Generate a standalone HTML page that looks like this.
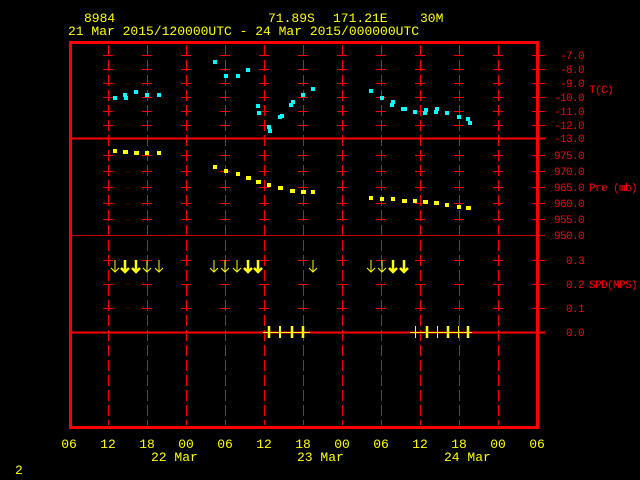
<!DOCTYPE html>
<html><head><meta charset="utf-8"><style>
html,body{margin:0;padding:0;background:#000;width:640px;height:480px;overflow:hidden}
svg{display:block}
text{font-family:"Liberation Mono",monospace;font-size:13px;white-space:pre}
.s text{font-size:11px;letter-spacing:-0.6px}
</style></head><body>
<svg width="640" height="480" viewBox="0 0 640 480" xml:space="preserve">
<defs>
<g id="row" stroke="#f00" stroke-width="1">
<path d="M103 0h10M142 0h10M181 0h10M220 0h10M259 0h10M298 0h10M337 0h10M376 0h10M415 0h10M454 0h10M493 0h10M532 0h13"/>
</g>
<path id="ar" d="M0 0v12M-4 8l4 4l4-4" fill="none" stroke="#ff0" stroke-width="1"/>
<path id="arb" d="M0 0v12M-4 8l4 4l4-4" fill="none" stroke="#ff0" stroke-width="2.5"/>
</defs>
<g stroke="#f00" stroke-width="1" stroke-dasharray="11,4">
<path d="M108.5 45V425M147.5 45V425M186.5 45V425M225.5 45V425M264.5 45V425M303.5 45V425M342.5 45V425M381.5 45V425M420.5 45V425M459.5 45V425M498.5 45V425"/>
</g>
<g>
<use href="#row" y="55.5"/><use href="#row" y="69.5"/><use href="#row" y="83.5"/><use href="#row" y="97.5"/><use href="#row" y="111.5"/><use href="#row" y="125.5"/>
<use href="#row" y="155.5"/><use href="#row" y="171.5"/><use href="#row" y="187.5"/><use href="#row" y="203.5"/><use href="#row" y="219.5"/>
<use href="#row" y="260.5"/><use href="#row" y="284.5"/><use href="#row" y="308.5"/>
</g>
<path d="M70 138.5H545" stroke="#f00" stroke-width="2"/>
<path d="M70 235.5H545" stroke="#c00" stroke-width="1"/>
<path d="M70 332.5H545" stroke="#f00" stroke-width="2"/>
<rect x="70.5" y="42.5" width="467" height="385" fill="none" stroke="#f00" stroke-width="3"/>
<g fill="#0ff">
<rect x="113" y="96" width="4" height="4"/><rect x="123" y="93" width="4" height="4"/><rect x="124" y="96" width="4" height="4"/><rect x="134" y="90" width="4" height="4"/><rect x="145" y="93" width="4" height="4"/><rect x="157" y="93" width="4" height="4"/>
<rect x="213" y="60" width="4" height="4"/><rect x="224" y="74" width="4" height="4"/><rect x="236" y="74" width="4" height="4"/><rect x="246" y="68" width="4" height="4"/><rect x="256" y="104" width="4" height="4"/><rect x="257" y="111" width="4" height="4"/><rect x="267" y="125" width="4" height="4"/><rect x="268" y="129" width="4" height="4"/><rect x="278" y="115" width="4" height="4"/><rect x="280" y="114" width="4" height="4"/><rect x="289" y="103" width="4" height="4"/><rect x="291" y="100" width="4" height="4"/><rect x="301" y="93" width="4" height="4"/><rect x="311" y="87" width="4" height="4"/>
<rect x="369" y="89" width="4" height="4"/><rect x="380" y="96" width="4" height="4"/><rect x="391" y="100" width="4" height="4"/><rect x="390" y="103" width="4" height="4"/><rect x="401" y="107" width="6" height="4"/><rect x="413" y="110" width="4" height="4"/><rect x="424" y="108" width="4" height="4"/><rect x="423" y="111" width="4" height="4"/><rect x="435" y="107" width="4" height="4"/><rect x="434" y="110" width="4" height="4"/><rect x="445" y="111" width="4" height="4"/><rect x="457" y="115" width="4" height="4"/><rect x="466" y="117" width="4" height="4"/><rect x="468" y="121" width="4" height="4"/>
</g>
<g fill="#ff0">
<rect x="113" y="149" width="4" height="4"/><rect x="123" y="150" width="5" height="4"/><rect x="134" y="151" width="5" height="4"/><rect x="145" y="151" width="4" height="4"/><rect x="157" y="151" width="4" height="4"/>
<rect x="213" y="165" width="4" height="4"/><rect x="224" y="169" width="4" height="4"/><rect x="236" y="172" width="4" height="4"/><rect x="246" y="176" width="5" height="4"/><rect x="256" y="180" width="5" height="4"/><rect x="267" y="183" width="4" height="4"/><rect x="278" y="186" width="5" height="4"/><rect x="290" y="189" width="5" height="4"/><rect x="301" y="190" width="5" height="4"/><rect x="311" y="190" width="4" height="4"/>
<rect x="369" y="196" width="4" height="4"/><rect x="380" y="197" width="4" height="4"/><rect x="391" y="197" width="4" height="4"/><rect x="402" y="199" width="5" height="4"/><rect x="413" y="199" width="4" height="4"/><rect x="423" y="200" width="5" height="4"/><rect x="434" y="201" width="5" height="4"/><rect x="445" y="203" width="4" height="4"/><rect x="457" y="205" width="4" height="4"/><rect x="466" y="206" width="5" height="4"/>
</g>
<g>
<use href="#ar" x="115" y="260"/><use href="#arb" x="125" y="260"/><use href="#arb" x="136" y="260"/><use href="#ar" x="147" y="260"/><use href="#ar" x="159" y="260"/>
<use href="#ar" x="214" y="260"/><use href="#ar" x="225" y="260"/><use href="#ar" x="237" y="260"/><use href="#arb" x="248" y="260"/><use href="#arb" x="258" y="260"/>
<use href="#ar" x="313" y="260"/>
<use href="#ar" x="371" y="260"/><use href="#ar" x="382" y="260"/><use href="#arb" x="393" y="260"/><use href="#arb" x="404" y="260"/>
</g>
<g stroke="#ff0">
<path d="M263 332.5H310M410 332.5H472" stroke-width="1"/>
<path d="M268.5 326v12M279.5 326v12M280.5 326v12M291.5 326v12M303.5 326v12M415.5 326v12M426.5 326v12M437.5 326v12M447.5 326v12M458.5 326v12" stroke-width="1"/>
<path d="M269 326v12M292 326v12M303 326v12M427 326v12M448 326v12M468 326v12" stroke-width="2.5"/>
</g>
<g fill="#ff0">
<text x="84" y="22">8984</text>
<text x="268" y="22">71.89S</text><text x="333" y="22">171.21E</text><text x="420" y="22">30M</text>
<text x="68" y="35">21 Mar 2015/120000UTC - 24 Mar 2015/000000UTC</text>
<g text-anchor="middle">
<text x="69" y="448">06</text><text x="108" y="448">12</text><text x="147" y="448">18</text><text x="186" y="448">00</text><text x="225" y="448">06</text><text x="264" y="448">12</text><text x="303" y="448">18</text><text x="342" y="448">00</text><text x="381" y="448">06</text><text x="420" y="448">12</text><text x="459" y="448">18</text><text x="498" y="448">00</text><text x="537" y="448">06</text>
</g>
<text x="151" y="461">22 Mar</text><text x="297" y="461">23 Mar</text><text x="444" y="461">24 Mar</text>
<text x="15" y="474">2</text>
</g>
<g class="s" fill="#f00" text-anchor="end">
<text x="584" y="59">-7.0</text><text x="584" y="73">-8.0</text><text x="584" y="87">-9.0</text><text x="584" y="101">-10.0</text><text x="584" y="115">-11.0</text><text x="584" y="129">-12.0</text><text x="584" y="142">-13.0</text>
<text x="584" y="159">975.0</text><text x="584" y="175">970.0</text><text x="584" y="191">965.0</text><text x="584" y="207">960.0</text><text x="584" y="223">955.0</text><text x="584" y="239">950.0</text>
<text x="584" y="264">0.3</text><text x="584" y="288">0.2</text><text x="584" y="312">0.1</text><text x="584" y="336">0.0</text>
</g>
<g class="s" fill="#f00">
<text x="589" y="93">T(C)</text><text x="589" y="191">Pre (mb)</text><text x="589" y="288">SPD(MPS)</text>
</g>
</svg>
</body></html>
